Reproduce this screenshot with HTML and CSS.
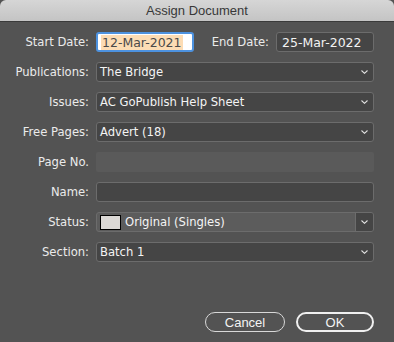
FILE: index.html
```html
<!DOCTYPE html>
<html>
<head>
<meta charset="utf-8">
<link rel="stylesheet" href="styles.css">
</head>
<body>
<div class="dialog">
  <div class="titlebar">Assign Document</div>
  <div class="form">
    <div class="row">
      <label class="lbl">Start Date:</label>
      <div class="date focus"><span class="sel">12-Mar-2021</span></div>
      <label class="lbl2">End Date:</label>
      <div class="date">25-Mar-2022</div>
    </div>
    <div class="row">
      <label class="lbl">Publications:</label>
      <div class="field select"><span>The Bridge</span><svg class="chev" width="7" height="4" viewBox="0 0 7 4"><path d="M0.5 0.5 L3.5 3.3 L6.5 0.5" fill="none" stroke="#e0e0e0" stroke-width="1.1"/></svg></div>
    </div>
    <div class="row">
      <label class="lbl">Issues:</label>
      <div class="field select"><span>AC GoPublish Help Sheet</span><svg class="chev" width="7" height="4" viewBox="0 0 7 4"><path d="M0.5 0.5 L3.5 3.3 L6.5 0.5" fill="none" stroke="#e0e0e0" stroke-width="1.1"/></svg></div>
    </div>
    <div class="row">
      <label class="lbl">Free Pages:</label>
      <div class="field select"><span>Advert (18)</span><svg class="chev" width="7" height="4" viewBox="0 0 7 4"><path d="M0.5 0.5 L3.5 3.3 L6.5 0.5" fill="none" stroke="#e0e0e0" stroke-width="1.1"/></svg></div>
    </div>
    <div class="row">
      <label class="lbl">Page No.</label>
      <div class="field disabled"></div>
    </div>
    <div class="row">
      <label class="lbl">Name:</label>
      <div class="field"></div>
    </div>
    <div class="row">
      <label class="lbl">Status:</label>
      <div class="field status">
        <div class="status-main"><span class="swatch"></span><span>Original (Singles)</span></div>
        <div class="status-btn"><svg width="7" height="4" viewBox="0 0 7 4"><path d="M0.5 0.5 L3.5 3.3 L6.5 0.5" fill="none" stroke="#e0e0e0" stroke-width="1.1"/></svg></div>
      </div>
    </div>
    <div class="row">
      <label class="lbl">Section:</label>
      <div class="field select"><span>Batch 1</span><svg class="chev" width="7" height="4" viewBox="0 0 7 4"><path d="M0.5 0.5 L3.5 3.3 L6.5 0.5" fill="none" stroke="#e0e0e0" stroke-width="1.1"/></svg></div>
    </div>
  </div>
  <div class="buttons">
    <div class="btn">Cancel</div>
    <div class="btn default">OK</div>
  </div>
</div>
</body>
</html>
```

FILE: styles.css
```css
html, body {
  margin: 0;
  padding: 0;
  background: #535353;
}
.dialog {
  width: 394px;
  height: 342px;
  display: flex;
  flex-direction: column;
  background: #535353;
  box-sizing: border-box;
  font-family: "DejaVu Sans", sans-serif;
  font-size: 11.6px;
  color: #ebebeb;
}
.titlebar {
  height: 21px;
  border-bottom: 1px solid #3a3a3a;
  background: linear-gradient(#d6d6d6, #c4c4c4);
  border-radius: 6px 6px 0 0;
  font-family: "Liberation Sans", Arial, sans-serif;
  font-size: 13px;
  color: #383838;
  display: flex;
  align-items: center;
  justify-content: center;
}
.form {
  display: flex;
  flex-direction: column;
  gap: 10px;
  padding: 10px 20px 0 0;
}
.row {
  display: flex;
  align-items: center;
  height: 20px;
}
.lbl {
  width: 96px;
  text-align: right;
  padding-right: 7px;
  box-sizing: border-box;
  flex: none;
  white-space: nowrap;
}
.lbl2 {
  width: 82px;
  text-align: right;
  padding-right: 7px;
  box-sizing: border-box;
  flex: none;
  white-space: nowrap;
}
.date {
  width: 98px;
  height: 20px;
  box-sizing: border-box;
  border: 1px solid #6c6c6c;
  border-radius: 3px;
  background: #454545;
  padding-left: 5px;
  display: flex;
  align-items: center;
  color: #f2f2f2;
  font-size: 12.5px;
}
.date.focus {
  background: #ffffff;
  border: 2px solid #4d92df;
  border-radius: 3px;
  padding-left: 3px;
  color: #4a4a4a;
}
.sel {
  background: #fcdcb4;
  line-height: 15px;
  padding: 0 1px;
}
.field {
  flex: 1;
  height: 20px;
  box-sizing: border-box;
  border: 1px solid #6c6c6c;
  border-radius: 3px;
  background: #454545;
  display: flex;
  align-items: center;
  color: #f4f4f4;
}
.select {
  padding: 0 5px 0 3px;
  justify-content: space-between;
}
.disabled {
  border: none;
  background: #5a5a5a;
  border-radius: 2px;
}
.status {
  background: #5c5c5c;
  overflow: hidden;
}
.status-main {
  flex: 1;
  display: flex;
  align-items: center;
  gap: 4px;
  padding-left: 3px;
  height: 100%;
}
.swatch {
  width: 21px;
  height: 15px;
  box-sizing: border-box;
  border: 1px solid #000;
  background: #dcd9d6;
  margin-top: 1px;
}
.status-btn {
  width: 17px;
  height: 100%;
  background: #454545;
  border-left: 1px solid #6c6c6c;
  display: flex;
  align-items: center;
  justify-content: center;
}
.buttons {
  margin-top: auto;
  display: flex;
  justify-content: flex-end;
  gap: 11px;
  padding: 0 20px 10px 0;
}
.btn {
  width: 80px;
  height: 20px;
  box-sizing: border-box;
  border: 1px solid #d8d8d8;
  border-radius: 10px;
  display: flex;
  align-items: center;
  justify-content: center;
  font-family: "Liberation Sans", Arial, sans-serif;
  font-size: 13px;
  color: #f4f4f4;
}
.btn.default {
  width: 78px;
  border: 2px solid #f0f0f0;
}
```
